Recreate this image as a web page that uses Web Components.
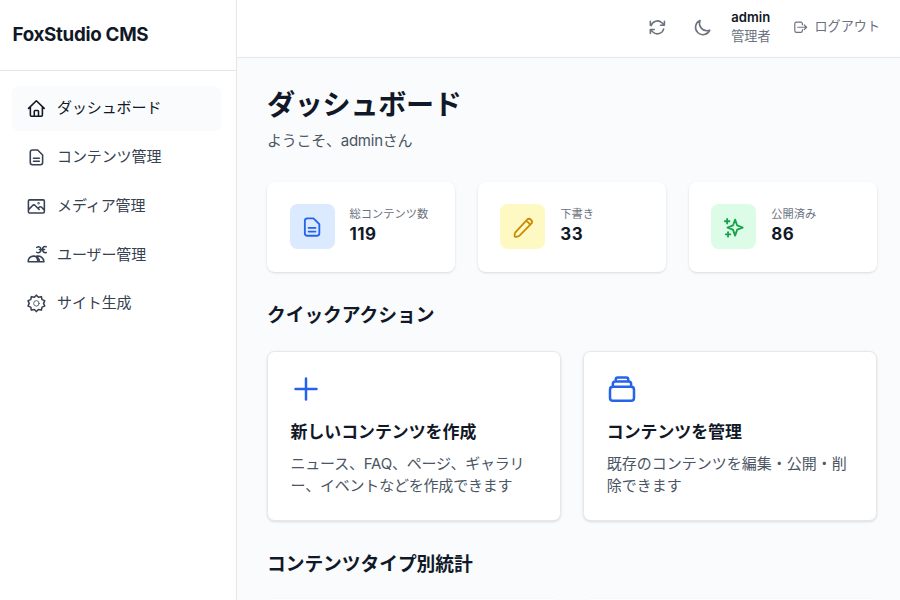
<!DOCTYPE html>
<html lang="ja">
<head>
<meta charset="utf-8">
<title>FoxStudio CMS</title>
<style>
  html, body { margin: 0; height: 100%; overflow: hidden; }
  body {
    font-family: Inter, "Noto Sans CJK JP", sans-serif;
    font-size: 15px;
    line-height: 22.5px;
    color: #111827;
    --line: #e5e7eb;
    --bg: #f9fbfc;
    --blue: #2563eb;
  }
</style>
</head>
<body>
<cms-app></cms-app>

<script>
const ICONS = {
  home: '<path d="M2 12 12 2.300 22 12M4.300 10v10.600c0 .8.6 1.400 1.400 1.400h12.600c.8 0 1.400-.6 1.400-1.400V10M9.300 22v-6.200c0-.6.5-1 1-1h3.400c.6 0 1 .4 1 1V22"/>',
  doc: '<path d="M13.600 2.500H7A2.800 2.800 0 0 0 4.200 5.300v13.400A2.800 2.800 0 0 0 7 21.500h10.200a2.800 2.800 0 0 0 2.800-2.800V8.900zM8.300 13h7.500M8.300 17h7.500"/>',
  image: '<path d="m2 16.200 5.200-5.400a2.200 2.200 0 0 1 3.200 0l5.200 5.200m-1.500-1.500 1.400-1.400a2.200 2.200 0 0 1 3.200 0L22 16.600M3.300 20.500h17.400c.8 0 1.500-.7 1.500-1.500V5.200c0-.8-.7-1.500-1.500-1.500H3.300c-.8 0-1.500.7-1.500 1.500V19c0 .8.700 1.500 1.500 1.500z"/><circle cx="14.800" cy="8" r=".5"/>',
  users: '<path d="M1.500 21.500c-.3-4.500 3-7.300 7-7.300s7.500 2.800 7.500 7.300zM9 14.200c3.500.5 4.800 3.300 4.800 7.300M12.500 14.200c5-.5 9 2.400 9.200 7.300h-5.500"/><path d="M12.500 3c3-1.500 5.500-.3 5.500 2.700s-2.300 5.200-5.500 3.700M24.500 2.200c-2.800-.9-4.500.5-4.500 3.500s2 4.800 4.700 3.900M15.800 5.800h6.700"/>',
  cog: '<path d="m12 1.500 2.600 2.700 3.800-.8.800 3.800 3.500 1.300-1.500 3.500 1.500 3.500-3.500 1.300-.8 3.800-3.800-.8L12 22.500l-2.600-2.700-3.800.8-.8-3.800-3.500-1.300L2.800 12 1.300 8.500l3.500-1.300.8-3.800 3.800.8z"/><circle cx="12" cy="12" r="3.500" stroke-width="1"/>',
  refresh: '<path d="M16 9.300h5V4.300M21 9.300l-3.200-3.200A8.300 8.300 0 0 0 4 9.800M8 14.700H3v5M3 9.300v-5M3 14.700l3.200 3.200A8.300 8.300 0 0 0 20 14.200"/>',
  moon: '<path d="M21.500 15.500A9.400 9.400 0 0 1 18 16.200 9.500 9.500 0 0 1 9 3.100 9.500 9.500 0 1 0 21.500 15.500z"/>',
  logout: '<path d="M15.500 8V6.200c0-1.500-1-2.700-2.700-2.700H6c-1.700 0-3 1.200-3 2.700v11.600c0 1.500 1.300 2.700 3 2.700h6.800c1.700 0 2.700-1.200 2.700-2.700V16M8 12h14.500m-4-4 4 4-4 4"/>',
  pencil: '<path d="M16.300 4.200a3.150 3.150 0 0 1 4.500 4.500L8.200 21.300c-1 1-4.700 1.700-5.200 1.200s.1-4.200 1.200-5.300zM15 5.600c1.200-.4 4.600 2.800 4.300 4.400"/>',
  sparkles: '<path d="m13.200 4 2.300 6.300 6 2.300-6 2.300-2.300 6.500-2.300-6.500-6-2.300 6-2.300z"/><path d="M4.500 3.200v5M2 5.700h5M5.500 17.500v5M3 20h5"/>',
  plus: '<path d="M12 3.600v16.800M3.600 12h16.800"/>',
  collection: '<path d="M4.700 10.200h14.600c1.400 0 2.300.9 2.300 2.300v6.600c0 1.300-.8 2.200-2.300 2.200H4.700c-1.500 0-2.300-.9-2.300-2.200v-6.600c0-1.400.9-2.300 2.300-2.300zM4.700 10.200V8c0-1.200.8-2 2-2h10.600c1.200 0 2 .8 2 2v2.200M7 6V4.300c0-1 .6-1.600 1.600-1.600h6.800c1 0 1.600.6 1.600 1.600V6"/>'
};

function define(name, html) {
  customElements.define(name, class extends HTMLElement {
    connectedCallback() {
      if (this.shadowRoot) return;
      const root = this.attachShadow({ mode: 'open' });
      root.innerHTML = typeof html === 'function' ? html(this) : html;
    }
  });
}

// <cms-icon name size stroke>
define('cms-icon', (el) => {
  const size = el.getAttribute('size') || 18.75;
  return `
    <style>
      :host { display: block; flex: none; width: ${size}px; height: ${size}px; }
      svg { display: block; overflow: visible; }
    </style>
    <svg width="${size}" height="${size}" viewBox="0 0 24 24" fill="none" stroke="currentColor"
      stroke-width="${el.getAttribute('stroke') || 2}" stroke-linecap="round" stroke-linejoin="round">${ICONS[el.getAttribute('name')]}</svg>
  `;
});

define('nav-item', (el) => `
  <style>
    :host {
      display: flex; align-items: center; gap: 11.25px;
      height: 45px; padding: 0 15px; border-radius: 7.5px; color: #374151;
      letter-spacing: -0.1px;
    }
    :host([active]) { background: var(--bg); color: #111827; }
  </style>
  <cms-icon name="${el.getAttribute('icon')}"></cms-icon>
  <span><slot></slot></span>
`);

define('cms-sidebar', `
  <style>
    :host { display: flex; flex-direction: column; flex: none; width: 236px; background: #fff; border-right: 1px solid var(--line); }
    .brand {
      display: flex; align-items: center; height: 70px; padding: 0 12.5px; border-bottom: 1px solid var(--line);
      font-size: 18.75px; font-weight: 700; letter-spacing: -0.3px;
    }
    nav { display: flex; flex-direction: column; gap: 3.75px; padding: 15px 15px 0 12px; }
  </style>
  <div class="brand">FoxStudio CMS</div>
  <nav>
    <nav-item icon="home" active>ダッシュボード</nav-item>
    <nav-item icon="doc">コンテンツ管理</nav-item>
    <nav-item icon="image">メディア管理</nav-item>
    <nav-item icon="users">ユーザー管理</nav-item>
    <nav-item icon="cog">サイト生成</nav-item>
  </nav>
`);

define('cms-header', `
  <style>
    :host {
      display: flex; align-items: center; justify-content: flex-end; flex: none; height: 57px;
      padding-right: 20px; background: #fff; border-bottom: 1px solid var(--line);
      font-size: 13.1px; line-height: 19px; color: #6b7280;
    }
    cms-icon { margin-top: -2px; }
    .moon { margin-left: 25.5px; }
    .user { margin: -4px 0 0 20px; }
    .name { font-weight: 600; color: #111827; }
    .logout { display: flex; align-items: center; gap: 7px; margin: -5px 0 0 22.5px; }
    .logout cms-icon { margin-top: 3px; }
  </style>
  <cms-icon name="refresh"></cms-icon>
  <cms-icon class="moon" name="moon"></cms-icon>
  <div class="user"><div class="name">admin</div><div>管理者</div></div>
  <div class="logout"><cms-icon name="logout" size="14.5"></cms-icon><span>ログアウト</span></div>
`);

define('stat-card', (el) => `
  <style>
    :host {
      display: flex; align-items: center; gap: 15px; flex: 1 1 0; min-width: 0; box-sizing: border-box; height: 90px; padding: 0 22.5px;
      background: #fff; border-radius: 7.5px; box-shadow: 0 1px 3px rgba(0,0,0,.1), 0 1px 2px -1px rgba(0,0,0,.1);
    }
    .tile { display: flex; align-items: center; justify-content: center; flex: none; width: 45px; height: 45px; border-radius: 7.5px; }
    .blue { background: #dbeafe; color: #2563eb; }
    .yellow { background: #fef9c3; color: #ca8a04; }
    .green { background: #dcfce7; color: #16a34a; }
    .text { padding-bottom: 2px; }
    .label { font-size: 11.25px; line-height: 16px; color: #6b7280; white-space: nowrap; }
    .value { font-size: 16.9px; line-height: 24px; font-weight: 700; letter-spacing: .5px; }
  </style>
  <div class="tile ${el.getAttribute('tone')}"><cms-icon name="${el.getAttribute('icon')}" size="22"></cms-icon></div>
  <div class="text">
    <div class="label"><slot></slot></div>
    <div class="value">${el.getAttribute('value')}</div>
  </div>
`);

define('action-card', (el) => `
  <style>
    :host {
      display: block; flex: 1 1 0; min-width: 0; box-sizing: border-box; height: 170px; padding: 21.5px 22.5px;
      background: #fff; border: 1px solid var(--line); border-radius: 7.5px;
      box-shadow: 0 1px 3px rgba(0,0,0,.1), 0 1px 2px -1px rgba(0,0,0,.1);
    }
    cms-icon { color: var(--blue); }
    h3 { margin: 15px 0 8.5px; font-size: 16.9px; line-height: 26px; font-weight: 600; }
    p { margin: 0; line-height: 22px; color: #4b5563; line-break: anywhere; }
    :host([tight]) p { letter-spacing: -0.2px; padding-right: 8px; }
  </style>
  <cms-icon name="${el.getAttribute('icon')}" size="30" stroke="2"></cms-icon>
  <h3>${el.getAttribute('heading')}</h3>
  <p><slot></slot></p>
`);

define('dashboard-page', `
  <style>
    :host { display: block; flex: 1; min-height: 0; overflow: hidden; padding: 30px 23px 0 30px; background: var(--bg); }
    h1 { margin: 0; font-size: 28.1px; line-height: 34px; font-weight: 700; letter-spacing: -0.3px; }
    .welcome { margin: 7.5px 0 29.5px; color: #4b5563; letter-spacing: -0.25px; }
    h2 { margin: 31px 0 22.5px; font-size: 18.75px; line-height: 26px; font-weight: 600; letter-spacing: -0.05px; }
    h2:last-of-type { margin-bottom: 21px; }
    .row { display: flex; gap: 22.5px; }
  </style>
  <h1>ダッシュボード</h1>
  <p class="welcome">ようこそ、adminさん</p>
  <div class="row">
    <stat-card icon="doc" tone="blue" value="119">総コンテンツ数</stat-card>
    <stat-card icon="pencil" tone="yellow" value="33">下書き</stat-card>
    <stat-card icon="sparkles" tone="green" value="86">公開済み</stat-card>
  </div>
  <h2>クイックアクション</h2>
  <div class="row">
    <action-card tight icon="plus" heading="新しいコンテンツを作成">ニュース、FAQ、ページ、ギャラリー、イベントなどを作成できます</action-card>
    <action-card icon="collection" heading="コンテンツを管理">既存のコンテンツを編集・公開・削除できます</action-card>
  </div>
  <h2>コンテンツタイプ別統計</h2>
  <div class="row">
    <stat-card icon="doc" tone="blue" value=""></stat-card>
    <stat-card icon="doc" tone="blue" value=""></stat-card>
  </div>
`);

define('cms-app', `
  <style>
    :host { display: flex; height: 100vh; }
    main { display: flex; flex-direction: column; flex: 1; min-width: 0; }
  </style>
  <cms-sidebar></cms-sidebar>
  <main>
    <cms-header></cms-header>
    <dashboard-page></dashboard-page>
  </main>
`);
</script>
</body>
</html>
